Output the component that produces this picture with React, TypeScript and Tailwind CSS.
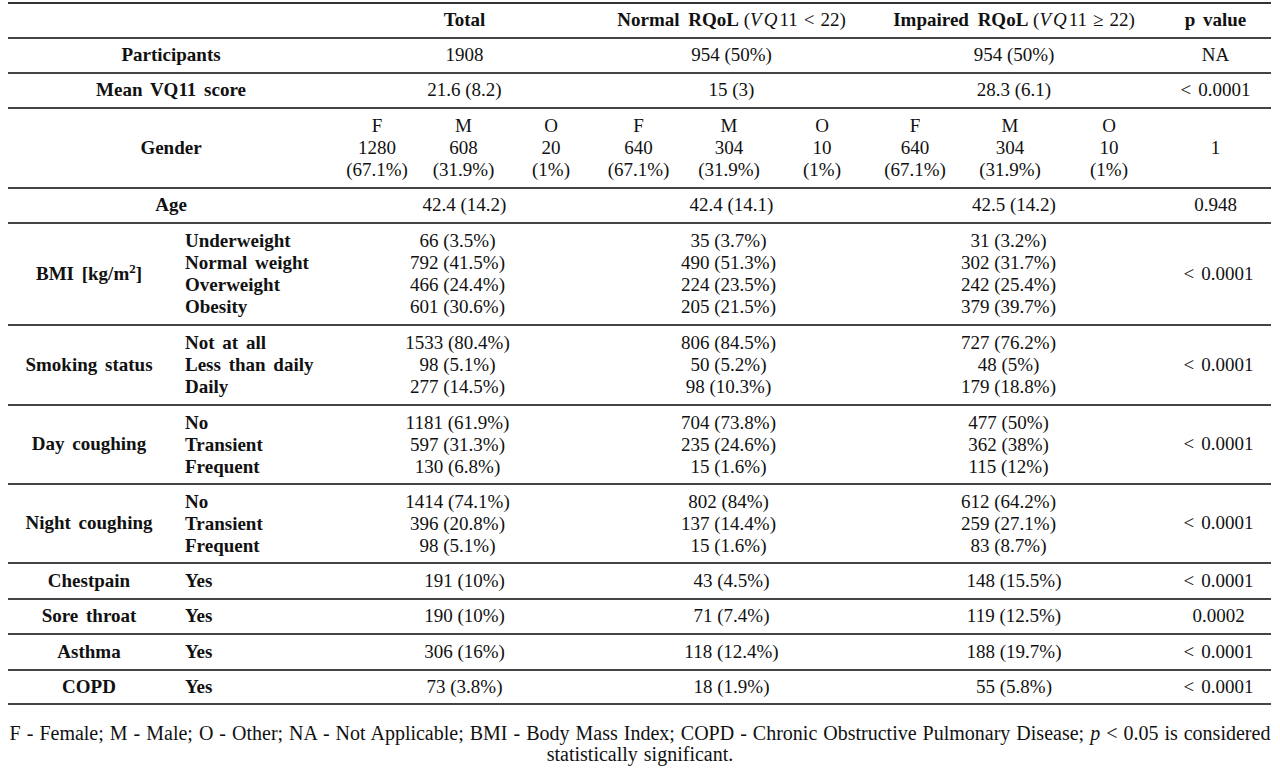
import React from "react";

const GRID =
  "grid grid-cols-[162px_164px_86px_87px_88px_87px_94px_92px_94px_96px_102px_111px] border-b-2 border-[#444]";

const C = "flex items-center justify-center text-center";

function Lines({ items, left }: { items: React.ReactNode[]; left?: boolean }) {
  return (
    <div className={left ? "flex flex-col items-start" : "flex flex-col items-center"}>
      {items.map((t, i) => (
        <div key={i} className="leading-[22px] whitespace-nowrap">
          {t}
        </div>
      ))}
    </div>
  );
}

const Lt = () => (
  <span className="whitespace-nowrap">
    &lt;<span className="inline-block w-[7px]" />0.0001
  </span>
);

type Group = {
  label: string;
  subs: string[];
  total: string[];
  normal: string[];
  impaired: string[];
  p: React.ReactNode;
  h: string;
};

const groups: Group[] = [
  {
    label: "BMI",
    subs: ["Underweight", "Normal weight", "Overweight", "Obesity"],
    total: ["66 (3.5%)", "792 (41.5%)", "466 (24.4%)", "601 (30.6%)"],
    normal: ["35 (3.7%)", "490 (51.3%)", "224 (23.5%)", "205 (21.5%)"],
    impaired: ["31 (3.2%)", "302 (31.7%)", "242 (25.4%)", "379 (39.7%)"],
    p: <Lt />,
    h: "h-[102px]",
  },
  {
    label: "Smoking status",
    subs: ["Not at all", "Less than daily", "Daily"],
    total: ["1533 (80.4%)", "98 (5.1%)", "277 (14.5%)"],
    normal: ["806 (84.5%)", "50 (5.2%)", "98 (10.3%)"],
    impaired: ["727 (76.2%)", "48 (5%)", "179 (18.8%)"],
    p: <Lt />,
    h: "h-[80px]",
  },
  {
    label: "Day coughing",
    subs: ["No", "Transient", "Frequent"],
    total: ["1181 (61.9%)", "597 (31.3%)", "130 (6.8%)"],
    normal: ["704 (73.8%)", "235 (24.6%)", "15 (1.6%)"],
    impaired: ["477 (50%)", "362 (38%)", "115 (12%)"],
    p: <Lt />,
    h: "h-[79px]",
  },
  {
    label: "Night coughing",
    subs: ["No", "Transient", "Frequent"],
    total: ["1414 (74.1%)", "396 (20.8%)", "98 (5.1%)"],
    normal: ["802 (84%)", "137 (14.4%)", "15 (1.6%)"],
    impaired: ["612 (64.2%)", "259 (27.1%)", "83 (8.7%)"],
    p: <Lt />,
    h: "h-[79px]",
  },
];

const yesRows = [
  { label: "Chestpain", t: "191 (10%)", n: "43 (4.5%)", i: "148 (15.5%)", p: <Lt />, h: "h-[36px]" },
  { label: "Sore throat", t: "190 (10%)", n: "71 (7.4%)", i: "119 (12.5%)", p: <span>0.0002</span>, h: "h-[35px]" },
  { label: "Asthma", t: "306 (16%)", n: "118 (12.4%)", i: "188 (19.7%)", p: <Lt />, h: "h-[36px]" },
  { label: "COPD", t: "73 (3.8%)", n: "18 (1.9%)", i: "55 (5.8%)", p: <Lt />, h: "h-[34px]" },
];

export default function App() {
  return (
    <div
      className="w-[1280px] h-[769px] bg-white text-[#111] overflow-hidden"
      style={{ fontFamily: '"Liberation Serif", "Times New Roman", serif' }}
    >
      <div className="ml-[8px] w-[1263px] mt-[2px] border-t-2 border-[#333] text-[19px]">
        {/* header */}
        <div className={`${GRID} h-[35px]`}>
          <div className="col-span-2" />
          <div className={`${C} col-span-3 font-bold`}>Total</div>
          <div className={`${C} col-span-3 whitespace-nowrap`}>
            <span className="font-bold [word-spacing:4px]">Normal RQoL</span>
            <span>
              &nbsp;(<i className="tracking-[2px]">VQ</i>11
              <span className="mx-[6px]">&lt;</span>22)
            </span>
          </div>
          <div className={`${C} col-span-3 whitespace-nowrap`}>
            <span className="font-bold [word-spacing:4px]">Impaired RQoL</span>
            <span>
              &nbsp;(<i className="tracking-[2px]">VQ</i>11
              <span className="mx-[6px]">≥</span>22)
            </span>
          </div>
          <div className={`${C} font-bold [word-spacing:3px]`}>p value</div>
        </div>

        {/* Participants */}
        <div className={`${GRID} h-[35px]`}>
          <div className={`${C} col-span-2 font-bold`}>Participants</div>
          <div className={`${C} col-span-3`}>1908</div>
          <div className={`${C} col-span-3`}>954 (50%)</div>
          <div className={`${C} col-span-3`}>954 (50%)</div>
          <div className={C}>NA</div>
        </div>

        {/* Mean */}
        <div className={`${GRID} h-[35px]`}>
          <div className={`${C} col-span-2 font-bold [word-spacing:3px]`}>Mean VQ11 score</div>
          <div className={`${C} col-span-3`}>21.6 (8.2)</div>
          <div className={`${C} col-span-3`}>15 (3)</div>
          <div className={`${C} col-span-3`}>28.3 (6.1)</div>
          <div className={C}>
            <Lt />
          </div>
        </div>

        {/* Gender */}
        <div className={`${GRID} h-[80px]`}>
          <div className={`${C} col-span-2 font-bold`}>Gender</div>
          {[
            ["F", "1280", "(67.1%)"],
            ["M", "608", "(31.9%)"],
            ["O", "20", "(1%)"],
            ["F", "640", "(67.1%)"],
            ["M", "304", "(31.9%)"],
            ["O", "10", "(1%)"],
            ["F", "640", "(67.1%)"],
            ["M", "304", "(31.9%)"],
            ["O", "10", "(1%)"],
          ].map((g, i) => (
            <div key={i} className={C}>
              <Lines items={g} />
            </div>
          ))}
          <div className={C}>1</div>
        </div>

        {/* Age */}
        <div className={`${GRID} h-[35px]`}>
          <div className={`${C} col-span-2 font-bold`}>Age</div>
          <div className={`${C} col-span-3`}>42.4 (14.2)</div>
          <div className={`${C} col-span-3`}>42.4 (14.1)</div>
          <div className={`${C} col-span-3`}>42.5 (14.2)</div>
          <div className={C}>0.948</div>
        </div>

        {groups.map((g) => (
          <div key={g.label} className={`${GRID} ${g.h}`}>
            <div className={`${C} font-bold whitespace-nowrap [word-spacing:3px]`}>
              {g.label === "BMI" ? (
                <span>
                  BMI [kg/m<sup className="text-[13px] relative -top-[7px]">2</sup>]
                </span>
              ) : (
                g.label
              )}
            </div>
            <div className="flex items-center pl-[15px] font-bold [word-spacing:3px]">
              <Lines items={g.subs} left />
            </div>
            <div className={`${C} col-span-3 pr-[14px]`}>
              <Lines items={g.total} />
            </div>
            <div className={`${C} col-span-3 pr-[6px]`}>
              <Lines items={g.normal} />
            </div>
            <div className={`${C} col-span-3 pr-[11px]`}>
              <Lines items={g.impaired} />
            </div>
            <div className={`${C} pl-[6px]`}>{g.p}</div>
          </div>
        ))}

        {yesRows.map((r, idx) => (
          <div
            key={r.label}
            className={`${GRID} ${r.h} ${idx === yesRows.length - 1 ? "border-[#222]" : ""}`}
          >
            <div className={`${C} font-bold whitespace-nowrap [word-spacing:3px]`}>{r.label}</div>
            <div className="flex items-center pl-[15px] font-bold">Yes</div>
            <div className={`${C} col-span-3`}>{r.t}</div>
            <div className={`${C} col-span-3`}>{r.n}</div>
            <div className={`${C} col-span-3`}>{r.i}</div>
            <div className={`${C} pl-[6px]`}>{r.p}</div>
          </div>
        ))}
      </div>

      <div className="mt-[18px] text-center text-[20px] leading-[21px]">
        <div className="whitespace-nowrap [word-spacing:1px]">
          F - Female; M - Male; O - Other; NA - Not Applicable; BMI - Body Mass Index; COPD - Chronic
          Obstructive Pulmonary Disease; <i>p</i>
          <span className="mx-[6px]">&lt;</span>0.05 is considered
        </div>
        <div className="[word-spacing:1px]">statistically significant.</div>
      </div>
    </div>
  );
}
